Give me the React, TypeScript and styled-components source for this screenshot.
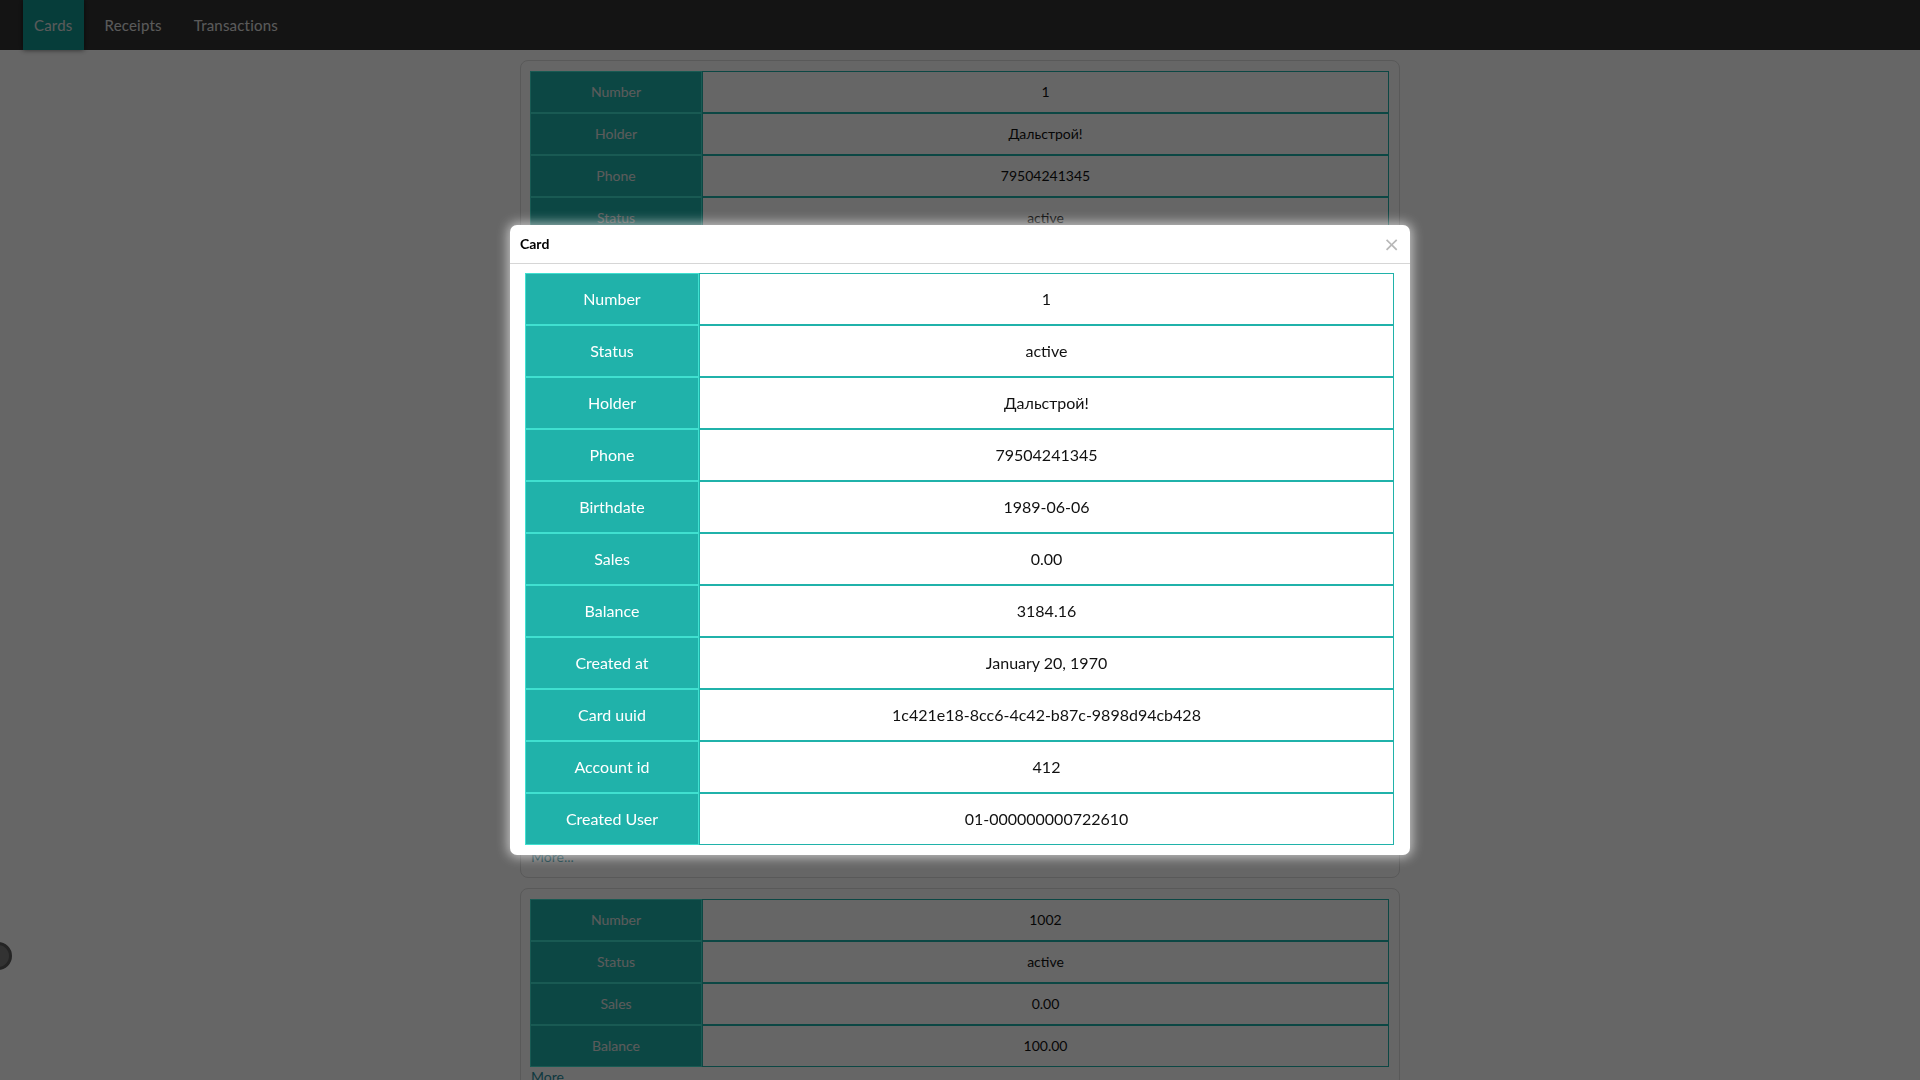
import React from 'react';
import styled, { createGlobalStyle } from 'styled-components';

const GlobalStyle = createGlobalStyle`
  html, body {
    margin: 0;
    padding: 0;
    background: #fff;
    font-family: Lato, "Liberation Sans", sans-serif;
  }
  * {
    box-sizing: border-box;
  }
`;

const Navbar = styled.nav`
  height: 50px;
  background: #333;
  display: flex;
  align-items: stretch;
  gap: 10px;
  padding-left: 23px;
`;

const Tab = styled.a<{ $active?: boolean }>`
  display: flex;
  align-items: center;
  padding: 0 11px;
  font-size: 15px;
  letter-spacing: 0.2px;
  color: #e2e2e2;
  text-decoration: none;
  background: ${(p) => (p.$active ? '#0f9891' : 'transparent')};
  box-shadow: ${(p) => (p.$active ? '0 0 5px rgba(0,0,0,0.6)' : 'none')};
`;

const Page = styled.main`
  width: 880px;
  margin: 10px auto 0;
  display: flex;
  flex-direction: column;
  gap: 10px;
`;

const Card = styled.section`
  background: #fff;
  border: 1px solid #dedede;
  border-radius: 8px;
  padding: 10px 10px 10px 9px;
`;

const Table = styled.div`
  display: flex;
  flex-direction: column;
`;

const Row = styled.div<{ $head: number }>`
  display: grid;
  grid-template-columns: ${(p) => p.$head}px 1fr;
`;

const HeadCell = styled.div<{ $big?: boolean }>`
  background: #20b2aa;
  color: ${(p) => (p.$big ? '#fff' : '#e4e4e4')};
  border: 1px solid #40e0d0;
  display: flex;
  align-items: center;
  justify-content: center;
  text-align: center;
  font-size: ${(p) => (p.$big ? '16px' : '14px')};
  line-height: ${(p) => (p.$big ? '24px' : '20px')};
  padding: ${(p) => (p.$big ? '13px 8px' : '10px 8px')};
`;

const ValueCell = styled.div<{ $big?: boolean }>`
  background: #fff;
  color: #111;
  border: 1px solid #20b2aa;
  display: flex;
  align-items: center;
  justify-content: center;
  text-align: center;
  white-space: pre-line;
  font-size: ${(p) => (p.$big ? '16px' : '14px')};
  line-height: ${(p) => (p.$big ? '24px' : '20px')};
  padding: ${(p) => (p.$big ? '13px 8px' : '10px 8px')};
`;

const MoreLink = styled.a`
  display: block;
  font-size: 14px;
  line-height: 20px;
  color: #2a8fa0;
  text-decoration: none;
  padding-left: 1px;
`;

const SideButton = styled.div`
  position: fixed;
  left: -16px;
  top: 942px;
  width: 28px;
  height: 28px;
  border-radius: 50%;
  background: #7e7e7e;
  border: 3px solid #5a5a5a;
`;

const Overlay = styled.div`
  position: fixed;
  inset: 0;
  background: rgba(0, 0, 0, 0.6);
`;

const Modal = styled.div`
  position: fixed;
  top: 225px;
  left: 510px;
  width: 900px;
  background: #fff;
  border-radius: 7px;
  box-shadow: 0 0 12px 2px rgba(255, 255, 255, 0.65);
`;

const ModalHeader = styled.header`
  display: flex;
  align-items: center;
  justify-content: space-between;
  padding: 10px 10px 10px 10px;
  border-bottom: 1px solid #d6d6d6;
`;

const ModalTitle = styled.h5`
  margin: 0;
  font-size: 14px;
  font-weight: 700;
  line-height: 18px;
  color: #000;
`;

const CloseButton = styled.button`
  border: none;
  background: none;
  padding: 0;
  font-size: 20px;
  line-height: 18px;
  color: #b8b8b8;
  cursor: pointer;
  font-family: "DejaVu Sans", sans-serif;
`;

const ModalBody = styled.div`
  padding: 9px 16px 10px 15px;
`;

type Field = [string, string];

const firstCard: Field[] = [
  ['Number', '1'],
  ['Holder', 'Дальстрой!'],
  ['Phone', '79504241345'],
  ['Status', 'active'],
  ['Birthdate', '1989-06-06'],
  ['Sales', '0.00'],
  ['Balance', '3184.16'],
  ['Bonus', '0.00'],
  ['Discount', '0'],
  ['Created at', 'January 20, 1970'],
  ['Updated at', 'January 20, 1970'],
  ['Card uuid', '1c421e18-8cc6-4c42-b87c-9898d94cb428'],
  ['Account id', '412'],
  ['Created User', '01-000000000722610'],
  ['Email', '-'],
  ['Gender', '-'],
  ['Type', 'loyalty'],
  ['Comment', 'Дальстрой!\n-'],
];

const secondCard: Field[] = [
  ['Number', '1002'],
  ['Status', 'active'],
  ['Sales', '0.00'],
  ['Balance', '100.00'],
];

const modalFields: Field[] = [
  ['Number', '1'],
  ['Status', 'active'],
  ['Holder', 'Дальстрой!'],
  ['Phone', '79504241345'],
  ['Birthdate', '1989-06-06'],
  ['Sales', '0.00'],
  ['Balance', '3184.16'],
  ['Created at', 'January 20, 1970'],
  ['Card uuid', '1c421e18-8cc6-4c42-b87c-9898d94cb428'],
  ['Account id', '412'],
  ['Created User', '01-000000000722610'],
];

function FieldTable({ fields, head, big }: { fields: Field[]; head: number; big?: boolean }) {
  return (
    <Table>
      {fields.map(([label, value]) => (
        <Row key={label} $head={head}>
          <HeadCell $big={big}>{label}</HeadCell>
          <ValueCell $big={big}>{value}</ValueCell>
        </Row>
      ))}
    </Table>
  );
}

export default function App() {
  return (
    <>
      <GlobalStyle />
      <Navbar>
        <Tab $active>Cards</Tab>
        <Tab>Receipts</Tab>
        <Tab>Transactions</Tab>
      </Navbar>
      <Page>
        <Card>
          <FieldTable fields={firstCard} head={172} />
          <MoreLink>More...</MoreLink>
        </Card>
        <Card>
          <FieldTable fields={secondCard} head={172} />
          <MoreLink>More...</MoreLink>
        </Card>
      </Page>
      <SideButton />
      <Overlay />
      <Modal>
        <ModalHeader>
          <ModalTitle>Card</ModalTitle>
          <CloseButton>×</CloseButton>
        </ModalHeader>
        <ModalBody>
          <FieldTable fields={modalFields} head={174} big />
        </ModalBody>
      </Modal>
    </>
  );
}
